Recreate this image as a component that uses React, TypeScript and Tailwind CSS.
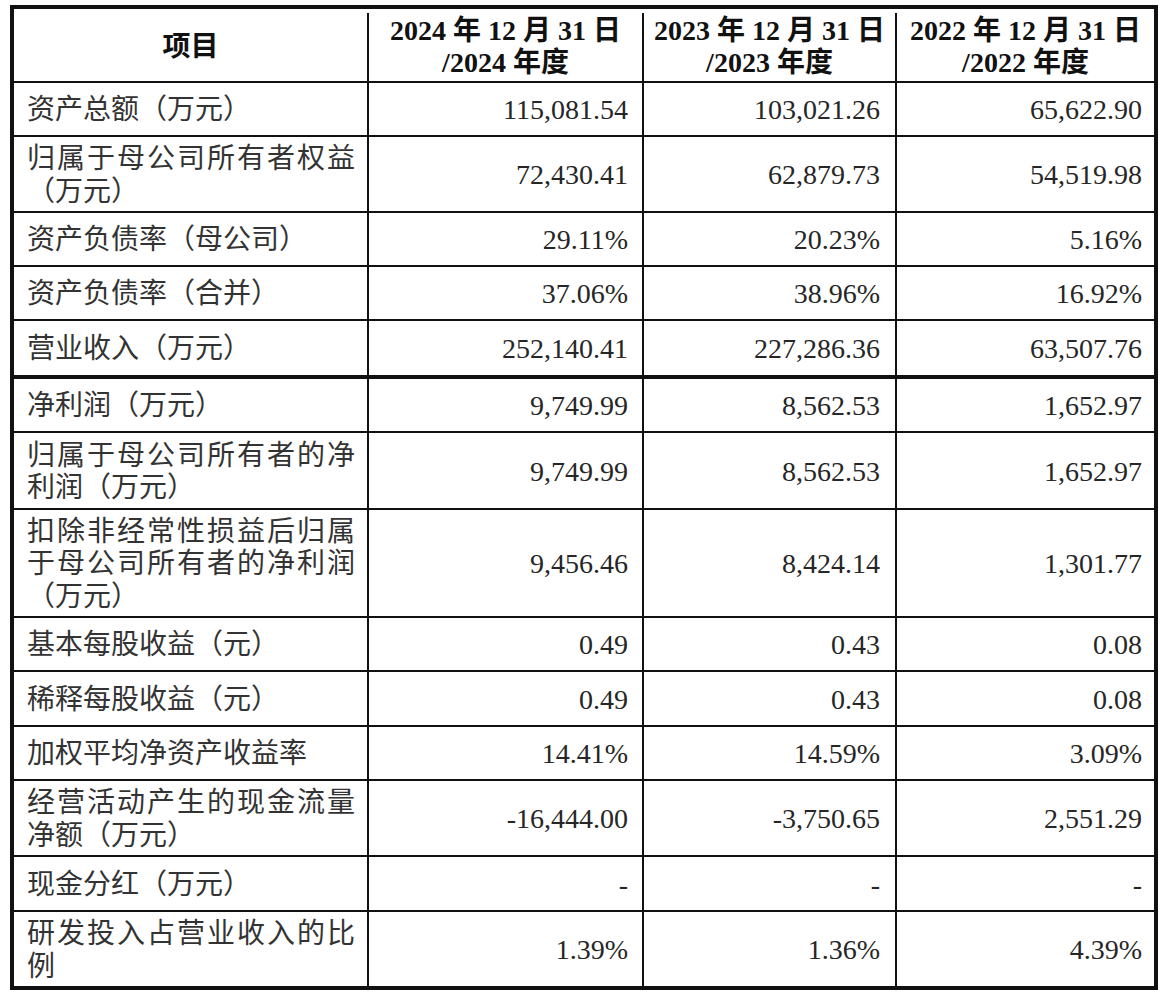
import React from "react";

type Row = { label: string; v: [string, string, string]; h: string; thick?: boolean; last?: boolean };

const rows: Row[] = [
  { label: "资产总额（万元）", v: ["115,081.54", "103,021.26", "65,622.90"], h: "h-[54px]" },
  { label: "归属于母公司所有者权益（万元）", v: ["72,430.41", "62,879.73", "54,519.98"], h: "h-[76px]" },
  { label: "资产负债率（母公司）", v: ["29.11%", "20.23%", "5.16%"], h: "h-[54px]" },
  { label: "资产负债率（合并）", v: ["37.06%", "38.96%", "16.92%"], h: "h-[54px]" },
  { label: "营业收入（万元）", v: ["252,140.41", "227,286.36", "63,507.76"], h: "h-[58px]", thick: true },
  { label: "净利润（万元）", v: ["9,749.99", "8,562.53", "1,652.97"], h: "h-[54px]" },
  { label: "归属于母公司所有者的净利润（万元）", v: ["9,749.99", "8,562.53", "1,652.97"], h: "h-[77px]" },
  { label: "扣除非经常性损益后归属于母公司所有者的净利润（万元）", v: ["9,456.46", "8,424.14", "1,301.77"], h: "h-[108px]" },
  { label: "基本每股收益（元）", v: ["0.49", "0.43", "0.08"], h: "h-[54px]" },
  { label: "稀释每股收益（元）", v: ["0.49", "0.43", "0.08"], h: "h-[55px]" },
  { label: "加权平均净资产收益率", v: ["14.41%", "14.59%", "3.09%"], h: "h-[54px]" },
  { label: "经营活动产生的现金流量净额（万元）", v: ["-16,444.00", "-3,750.65", "2,551.29"], h: "h-[76px]" },
  { label: "现金分红（万元）", v: ["-", "-", "-"], h: "h-[55px]" },
  { label: "研发投入占营业收入的比例", v: ["1.39%", "1.36%", "4.39%"], h: "h-[74px]", last: true },
];

const font = "font-['Liberation_Serif','Noto_Sans_CJK_SC',serif]";

export default function App() {
  return (
    <div className="min-h-[999px] w-[1173px] bg-white pl-[10px] pt-[5px]">
      <div className={`w-[1148px] border-[4px] border-[#111] ${font} text-[28px] leading-[32.5px] text-[#262626]`}>
        {/* header */}
        <div className="grid h-[74px] grid-cols-[355px_275px_253px_257px] border-b-2 border-[#111] pt-[4px] font-bold text-[#111]">
          <div className="flex items-center justify-center border-r-2 border-[#111]">项目</div>
          <div className="flex flex-col items-center justify-center border-r-2 border-[#111]">
            <span className="whitespace-pre">2024 年 12 月 31 日</span>
            <span className="whitespace-pre">/2024 年度</span>
          </div>
          <div className="flex flex-col items-center justify-center border-r-2 border-[#111]">
            <span className="whitespace-pre">2023 年 12 月 31 日</span>
            <span className="whitespace-pre">/2023 年度</span>
          </div>
          <div className="flex flex-col items-center justify-center">
            <span className="whitespace-pre">2022 年 12 月 31 日</span>
            <span className="whitespace-pre">/2022 年度</span>
          </div>
        </div>
        {rows.map((r, i) => (
          <div
            key={i}
            className={`grid grid-cols-[355px_275px_253px_257px] ${r.h} ${
              r.last ? "" : r.thick ? "border-b-[4px] border-[#111]" : "border-b-2 border-[#111]"
            }`}
          >
            <div className="flex items-center border-r-2 border-[#111] pl-[13px] pr-[12px] pt-[3px]">
              <p className="w-full text-justify text-[#333]">{r.label}</p>
            </div>
            <div className="flex items-center justify-end border-r-2 border-[#111] pr-[14px] pt-[3px]">{r.v[0]}</div>
            <div className="flex items-center justify-end border-r-2 border-[#111] pr-[15px] pt-[3px]">{r.v[1]}</div>
            <div className="flex items-center justify-end pr-[12px] pt-[3px]">{r.v[2]}</div>
          </div>
        ))}
      </div>
    </div>
  );
}
